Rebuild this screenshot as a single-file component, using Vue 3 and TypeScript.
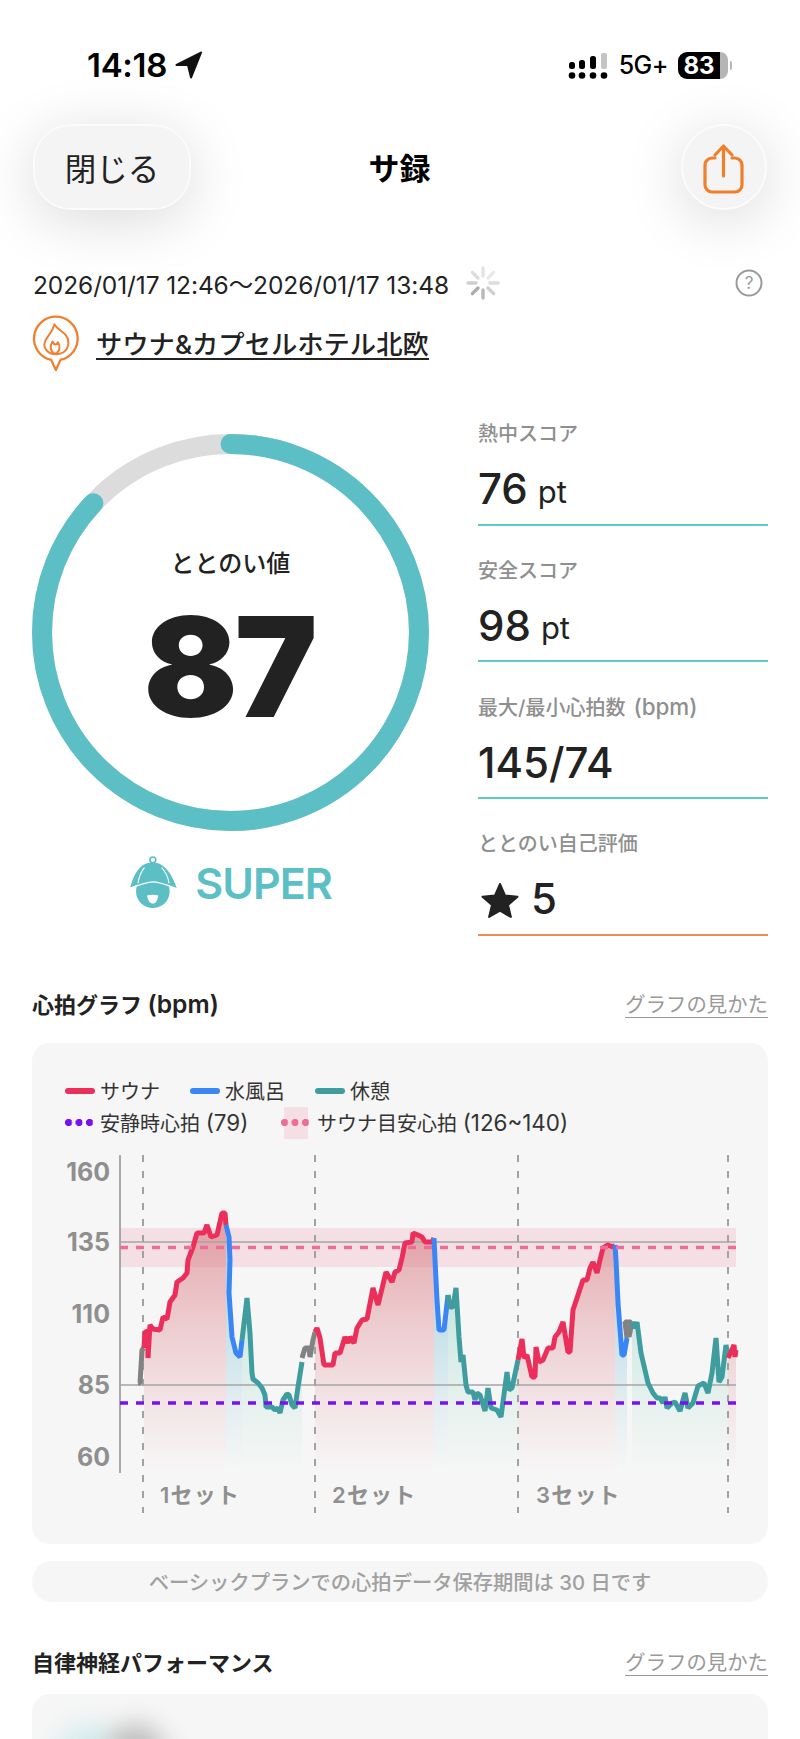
<script setup lang="ts">
type Kind = 'sauna' | 'water' | 'rest' | 'idle'

const circumference = 2 * Math.PI * 188.5
const gaugeDash = `${circumference * 0.87} ${circumference}`

const scores = [
  { label: '熱中スコア', note: '', value: '76', unit: 'pt' },
  { label: '安全スコア', note: '', value: '98', unit: 'pt' },
  { label: '最大/最小心拍数', note: '(bpm)', value: '145/74', unit: '' },
]

const axisLabels = [
  { text: '160', y: 1172 },
  { text: '135', y: 1242 },
  { text: '110', y: 1314 },
  { text: '85', y: 1385 },
  { text: '60', y: 1457 },
]
const setLines = [143, 315, 518, 728]
const setLabels = [
  { text: '1セット', x: 160 },
  { text: '2セット', x: 332 },
  { text: '3セット', x: 536 },
]

const segments: { kind: Kind; pts: number[] }[] = [
  { kind: 'idle', pts: [138, 1383, 140, 1383, 141, 1367, 142, 1350, 144, 1348] },
  { kind: 'sauna', pts: [144, 1348, 145, 1332, 148, 1331, 148, 1358, 150, 1325, 153, 1329, 160, 1330, 163, 1317, 167, 1319, 170, 1302, 175, 1295, 177, 1282, 183, 1278, 187, 1273, 188, 1260, 193, 1247, 197, 1233, 204, 1233, 207, 1225, 211, 1237, 217, 1235, 222, 1213, 225, 1213, 226, 1225] },
  { kind: 'water', pts: [226, 1225, 229, 1237, 230, 1260, 229, 1293, 232, 1337, 236, 1353, 240, 1357, 242, 1340] },
  { kind: 'rest', pts: [242, 1340, 247, 1298, 250, 1333, 252, 1373, 253, 1379, 258, 1383, 262, 1388, 265, 1395, 266, 1407, 272, 1407, 275, 1410, 278, 1408, 280, 1413, 283, 1400, 287, 1394, 289, 1395, 292, 1405, 295, 1408, 298, 1387, 302, 1362] },
  { kind: 'idle', pts: [302, 1358, 305, 1348, 309, 1348, 310, 1357, 313, 1340, 315, 1332] },
  { kind: 'sauna', pts: [315, 1332, 317, 1328, 320, 1338, 324, 1365, 333, 1365, 335, 1353, 340, 1353, 345, 1337, 348, 1343, 350, 1337, 354, 1343, 357, 1328, 362, 1320, 367, 1319, 373, 1288, 378, 1305, 386, 1272, 392, 1282, 395, 1272, 399, 1270, 402, 1258, 405, 1243, 412, 1242, 413, 1233, 418, 1235, 422, 1237, 425, 1242, 432, 1242, 434, 1238] },
  { kind: 'water', pts: [434, 1238, 435, 1260, 437, 1300, 439, 1330, 444, 1330, 448, 1295] },
  { kind: 'rest', pts: [448, 1295, 450, 1307, 453, 1307, 456, 1288, 459, 1337, 461, 1362, 463, 1355, 466, 1385, 468, 1392, 473, 1392, 475, 1400, 477, 1393, 480, 1395, 485, 1411, 488, 1388, 491, 1408, 497, 1410, 501, 1417, 507, 1372, 509, 1390, 512, 1388, 518, 1360] },
  { kind: 'sauna', pts: [518, 1360, 522, 1339, 524, 1358, 527, 1355, 532, 1377, 535, 1377, 536, 1347, 539, 1362, 543, 1360, 548, 1348, 553, 1348, 555, 1337, 559, 1332, 563, 1322, 568, 1352, 570, 1352, 573, 1310, 577, 1298, 583, 1280, 587, 1280, 590, 1268, 593, 1262, 597, 1273, 600, 1260, 603, 1248, 608, 1245, 613, 1247, 615, 1245] },
  { kind: 'water', pts: [615, 1245, 616, 1260, 618, 1303, 622, 1355, 624, 1355, 627, 1338] },
  { kind: 'idle', pts: [627, 1338, 625, 1322, 631, 1322, 629, 1337, 632, 1322] },
  { kind: 'rest', pts: [632, 1322, 635, 1328, 637, 1322, 641, 1353, 648, 1383, 653, 1393, 657, 1398, 660, 1398, 663, 1403, 665, 1397, 667, 1408, 672, 1403, 675, 1402, 680, 1411, 685, 1393, 688, 1408, 693, 1403, 698, 1386, 704, 1383, 708, 1393, 712, 1373, 716, 1338, 719, 1382, 722, 1377, 726, 1345, 728, 1355] },
  { kind: 'sauna', pts: [728, 1358, 731, 1352, 734, 1345, 735, 1357, 736, 1350] },
]

function toLine(pts: number[]) {
  let out = ''
  for (let i = 0; i < pts.length; i += 2) {
    out += `${pts[i]},${pts[i + 1]} `
  }
  return out.trim()
}

function toArea(pts: number[]) {
  return `${pts[0]},1472 ${toLine(pts)} ${pts[pts.length - 2]},1472`
}
</script>

<template>
  <div class="page">
    <div class="status">
      <div class="status-left">
        <span class="clock">14:18</span>
        <svg width="27" height="28" viewBox="0 0 26 27">
          <path d="M25 1.5 1.5 13.5h11l3 12z" fill="#111" stroke="#111" stroke-width="2" stroke-linejoin="round" />
        </svg>
      </div>
      <div class="status-right">
        <svg width="40" height="28" viewBox="0 0 40 28">
          <rect x="1" y="11" width="6" height="7" rx="2.5" fill="#000" />
          <rect x="11" y="9" width="6" height="9" rx="2.5" fill="#000" />
          <rect x="22" y="5" width="6" height="13" rx="2.5" fill="#000" />
          <rect x="33" y="2" width="6" height="16" rx="2" fill="#c4c4c4" />
          <circle cx="4" cy="24.5" r="3.3" fill="#000" />
          <circle cx="14" cy="24.5" r="3.3" fill="#000" />
          <circle cx="25" cy="24.5" r="3.3" fill="#000" />
          <circle cx="36" cy="24.5" r="3.3" fill="#000" />
        </svg>
        <span class="network">5G+</span>
        <div class="battery">
          <span class="battery-level">83</span>
          <span class="battery-rest"></span>
          <span class="battery-tip"></span>
        </div>
      </div>
    </div>

    <div class="nav">
      <button class="glass close">閉じる</button>
      <div class="nav-title">サ録</div>
      <button class="glass share">
        <svg width="42" height="52" viewBox="0 0 42 52">
          <path d="M12 15H9a7 7 0 0 0-7 7v20a7 7 0 0 0 7 7h23a7 7 0 0 0 7-7V22a7 7 0 0 0-7-7h-3" fill="none" stroke="#f07f2c" stroke-width="3.2" stroke-linecap="round" />
          <path d="M20.5 33V3M12 12l8.5-9 8.5 9" fill="none" stroke="#f07f2c" stroke-width="3.2" stroke-linecap="round" stroke-linejoin="round" />
        </svg>
      </button>
    </div>

    <div class="date-row">
      <span class="date">2026/01/17 12:46～2026/01/17 13:48</span>
      <svg class="spinner" width="34" height="34" viewBox="0 0 34 34">
        <g stroke-width="3.4" stroke-linecap="round">
          <path d="M17 2v8" stroke="#e2e2e2" />
          <path d="M27.6 6.4 22 12" stroke="#e8e8e8" />
          <path d="M32 17h-8" stroke="#dcdcdc" />
          <path d="M27.6 27.6 22 22" stroke="#cfcfcf" />
          <path d="M17 32v-8" stroke="#b8b8b8" />
          <path d="M6.4 27.6 12 22" stroke="#ababab" />
          <path d="M2 17h8" stroke="#d0d0d0" />
          <path d="M6.4 6.4 12 12" stroke="#dcdcdc" />
        </g>
      </svg>
      <svg class="help" width="28" height="28" viewBox="0 0 28 28">
        <circle cx="14" cy="14" r="12.5" fill="none" stroke="#999" stroke-width="2" />
        <text x="14" y="20" text-anchor="middle" class="help-mark">?</text>
      </svg>
    </div>

    <div class="venue">
      <svg width="48" height="58" viewBox="35 200 145 175">
        <path d="M107 205a66 66 0 0 1 14 130.500L107 366l-14-30.500A66 66 0 0 1 107 205z" fill="none" stroke="#f08030" stroke-width="7" stroke-linejoin="round" />
        <path d="M103 228c7 18 44 25 42 57-2 27-24 35-40 33-21 0-36-18-32-33 3-18 22-27 30-57z" fill="none" stroke="#f08030" stroke-width="6" stroke-linejoin="round" />
        <path d="M104 318c-14-9-16-23-7-38 5 11 11 13 16 2 10 14 6 28-9 36z" fill="none" stroke="#f08030" stroke-width="6" stroke-linejoin="round" />
      </svg>
      <span class="venue-name">サウナ&amp;カプセルホテル北欧</span>
    </div>

    <div class="summary">
      <div class="gauge-col">
        <div class="gauge">
          <svg width="397" height="397" viewBox="0 0 397 397">
            <circle cx="198.500" cy="198.500" r="188.500" fill="none" stroke="#dcdcdc" stroke-width="20" />
            <circle cx="198.500" cy="198.500" r="188.500" fill="none" stroke="#5dbfc6" stroke-width="20" stroke-linecap="round" :stroke-dasharray="gaugeDash" transform="rotate(-90 198.500 198.500)" />
          </svg>
          <div class="gauge-text">
            <div class="gauge-label">ととのい値</div>
            <div class="gauge-value">87</div>
          </div>
        </div>
        <div class="rank">
          <svg width="49" height="55" viewBox="25 45 150 170">
            <circle cx="98" cy="60" r="9" fill="none" stroke="#5dbfc6" stroke-width="5" />
            <circle cx="98" cy="157" r="52" fill="#5dbfc6" />
            <path d="M28 146C40 100 60 68 98 68s62 42 74 80c-30-13-52-23-74-23s-45 10-70 21z" fill="#5dbfc6" />
            <path d="M26 149c32-13 54-21 72-21 22 0 49 12 76 22" fill="none" stroke="#fff" stroke-width="3.500" />
            <path d="M72 84C60 98 55 114 52 132M125 84c14 14 20 30 23 48" fill="none" stroke="#fff" stroke-width="3.500" />
            <path d="M80 170c12-3 24-3 35 0-2 16-9 25-17 25s-16-9-18-25z" fill="#fff" />
          </svg>
          <span class="rank-name">SUPER</span>
        </div>
      </div>
      <div class="score-col">
        <div v-for="score in scores" :key="score.label" class="score">
          <div class="score-label">{{ score.label }}<span v-if="score.note" class="latin note">{{ score.note }}</span></div>
          <div class="score-value">{{ score.value }}<span v-if="score.unit" class="score-unit">{{ score.unit }}</span></div>
        </div>
        <div class="score score-self">
          <div class="score-label">ととのい自己評価</div>
          <div class="score-value">
            <svg class="star" width="40" height="37" viewBox="0 0 40 37">
              <path d="M20 3l5 11.500 12.500 1.200-9.500 8.300 2.900 12-10.900-6.400-10.900 6.400 2.900-12-9.500-8.300L15 14.500z" fill="#222" stroke="#222" stroke-width="2" stroke-linejoin="round" />
            </svg>
            5
          </div>
        </div>
      </div>
    </div>

    <div class="section-head heart-head">
      <h2>心拍グラフ <span class="latin">(bpm)</span></h2>
      <a>グラフの見かた</a>
    </div>

    <div class="card chart-card">
      <div class="legend">
        <div class="legend-row">
          <span class="legend-item item-sauna"><i class="bar sauna"></i>サウナ</span>
          <span class="legend-item item-water"><i class="bar water"></i>水風呂</span>
          <span class="legend-item"><i class="bar rest"></i>休憩</span>
        </div>
        <div class="legend-row">
          <span class="legend-item item-calm"><i class="dots calm"></i>安静時心拍&nbsp;<span class="latin">(79)</span></span>
          <span class="legend-item"><i class="band-swatch"><i class="dots target"></i></i>サウナ目安心拍&nbsp;<span class="latin">(126~140)</span></span>
        </div>
      </div>
      <svg class="chart" width="736" height="403" viewBox="32 1140 736 403">
        <defs>
          <linearGradient id="fill-sauna" gradientUnits="userSpaceOnUse" x1="0" y1="1215" x2="0" y2="1472">
            <stop offset="0" stop-color="#d9838a" stop-opacity="0.72" />
            <stop offset="1" stop-color="#e8a0a8" stop-opacity="0" />
          </linearGradient>
          <linearGradient id="fill-water" gradientUnits="userSpaceOnUse" x1="0" y1="1290" x2="0" y2="1472">
            <stop offset="0" stop-color="#8cc6da" stop-opacity="0.6" />
            <stop offset="1" stop-color="#a8d4e4" stop-opacity="0" />
          </linearGradient>
          <linearGradient id="fill-rest" gradientUnits="userSpaceOnUse" x1="0" y1="1290" x2="0" y2="1472">
            <stop offset="0" stop-color="#9cd8c8" stop-opacity="0.55" />
            <stop offset="1" stop-color="#b0e2d4" stop-opacity="0" />
          </linearGradient>
        </defs>

        <rect x="120" y="1228" width="616" height="39" fill="#f3dfe4" />
        <template v-for="(seg, i) in segments" :key="'area' + i">
          <polygon v-if="seg.kind !== 'idle'" :points="toArea(seg.pts)" :fill="`url(#fill-${seg.kind})`" />
        </template>

        <line v-for="x in setLines" :key="x" :x1="x" :x2="x" y1="1155" y2="1513" class="set-line" />
        <line x1="120" x2="120" y1="1155" y2="1473" class="axis" />
        <line x1="120" x2="736" y1="1242" y2="1242" class="guide" />
        <line x1="120" x2="736" y1="1385" y2="1385" class="guide" />

        <polyline v-for="(seg, i) in segments" :key="'line' + i" :points="toLine(seg.pts)" :class="['trace', seg.kind]" />

        <line x1="120" x2="736" y1="1247.500" y2="1247.500" class="dash-target" />
        <line x1="120" x2="736" y1="1403" y2="1403" class="dash-calm" />

        <text v-for="a in axisLabels" :key="a.text" x="110" :y="a.y + 9" text-anchor="end" class="axis-label">{{ a.text }}</text>
        <text v-for="s in setLabels" :key="s.text" :x="s.x" y="1503" class="set-label">{{ s.text }}</text>
      </svg>
    </div>

    <div class="notice">ベーシックプランでの心拍データ保存期間は 30 日です</div>

    <div class="section-head perf-head">
      <h2>自律神経パフォーマンス</h2>
      <a>グラフの見かた</a>
    </div>

    <div class="card perf-card">
      <div class="blob teal"></div>
      <div class="blob gray"></div>
    </div>
  </div>
</template>

<style>
body {
  margin: 0;
  background: #fff;
}
</style>

<style scoped>
.page {
  width: 800px;
  height: 1739px;
  overflow: hidden;
  background: #fff;
  color: #222;
  font-family: Inter, "Noto Sans CJK JP", sans-serif;
}

.latin {
  font-size: 1.120em;
}

.note {
  margin-left: 8px;
}

.status {
  height: 124px;
  box-sizing: border-box;
  padding: 50px 72px 0 87px;
  display: flex;
  justify-content: space-between;
  align-items: flex-start;
  color: #000;
}

.status-left {
  display: flex;
  align-items: center;
  gap: 8px;
  height: 30px;
}

.clock {
  font-size: 33px;
  line-height: 30px;
  font-weight: 600;
  letter-spacing: -0.3px;
}

.status-right {
  display: flex;
  align-items: center;
  height: 30px;
}

.network {
  margin-left: 11px;
  font-size: 25px;
  font-weight: 500;
  letter-spacing: -0.5px;
}

.battery {
  margin-left: 10px;
  width: 50px;
  height: 27px;
  display: flex;
  position: relative;
  border-radius: 9px;
}

.battery-level {
  width: 42px;
  background: #000;
  color: #fff;
  border-radius: 9px 0 0 9px;
  font-size: 24px;
  line-height: 27px;
  font-weight: 700;
  text-align: center;
}

.battery-rest {
  width: 8px;
  background: #b5b5b5;
  border-radius: 0 9px 9px 0;
}

.battery-tip {
  position: absolute;
  right: -4px;
  top: 9px;
  width: 2px;
  height: 9px;
  border-radius: 0 2px 2px 0;
  background: #b5b5b5;
}

.nav {
  height: 86px;
  padding: 0 33px;
  display: flex;
  justify-content: space-between;
  align-items: center;
}

.glass {
  height: 86px;
  box-sizing: border-box;
  border: 2px solid #fbfbfb;
  background: #f4f4f4;
  box-shadow: 0 10px 60px rgba(0, 0, 0, 0.15);
  color: #222;
  font-family: inherit;
  padding: 0;
  display: flex;
  align-items: center;
  justify-content: center;
}

.close {
  width: 158px;
  border-radius: 38px;
  font-size: 31.500px;
}

.share {
  width: 86px;
  border-radius: 50%;
}

.share svg {
  margin-top: 4px;
}

.nav-title {
  font-size: 31px;
  font-weight: 700;
  color: #000;
  margin-left: -73px;
  margin-top: -2px;
}

.date-row {
  margin-top: 56px;
  height: 34px;
  padding: 0 37px 0 33px;
  display: flex;
  align-items: center;
}

.date {
  font-size: 24.500px;
  white-space: nowrap;
  letter-spacing: -0.1px;
}

.spinner {
  margin-left: 17px;
}

.help {
  margin-left: auto;
}

.help-mark {
  font-size: 17px;
  fill: #999;
}

.venue {
  margin-top: 15px;
  padding-left: 32px;
  display: flex;
  align-items: flex-start;
  gap: 16px;
}

.venue-name {
  margin-top: 17px;
  font-size: 26.300px;
  line-height: 26px;
  font-weight: 500;
  border-bottom: 2.500px solid #222;
}

.summary {
  margin-top: 16px;
  padding: 0 32px;
  display: flex;
  justify-content: space-between;
}

.gauge-col {
  width: 397px;
  padding-top: 45px;
}

.gauge {
  display: grid;
  width: 397px;
  height: 397px;
}

.gauge > * {
  grid-area: 1 / 1;
}

.gauge-text {
  text-align: center;
}

.gauge-label {
  margin-top: 115px;
  font-size: 24px;
  line-height: 30px;
  font-weight: 500;
}

.gauge-value {
  margin: 33px 0 0 -3px;
  font-size: 139px;
  line-height: 110px;
  font-weight: 900;
  letter-spacing: -3px;
}

.rank {
  margin-top: 24px;
  display: flex;
  align-items: center;
  justify-content: center;
  gap: 17px;
  color: #5dbfc6;
}

.rank-name {
  font-size: 43px;
  font-weight: 600;
  letter-spacing: -1px;
}

.score-col {
  width: 290px;
}

.score {
  height: 136.700px;
  box-sizing: border-box;
  padding-top: 31px;
  border-bottom: 2px solid #5fc9c6;
}

.score-self {
  border-bottom-color: #ee8f4e;
}

.score-label {
  font-size: 20px;
  line-height: 28px;
  font-weight: 500;
  color: #8f8f8f;
  white-space: nowrap;
}

.score-value {
  margin-top: 16px;
  height: 50px;
  display: flex;
  align-items: center;
  font-size: 42px;
  line-height: 50px;
  font-weight: 500;
  color: #222;
}

.score-unit {
  margin-left: 10px;
  margin-top: 5px;
  font-size: 31px;
  font-weight: 400;
}

.star {
  margin-left: 2px;
  margin-right: 11px;
}

.section-head {
  padding: 0 32px;
  display: flex;
  justify-content: space-between;
  align-items: center;
  height: 30px;
}

.heart-head {
  margin-top: 54px;
}

.perf-head {
  margin-top: 46px;
}

.section-head h2 {
  margin: 0 0 3px;
  font-size: 22px;
  font-weight: 600;
  color: #222;
}

.section-head a {
  font-size: 20.400px;
  color: #999;
  border-bottom: 1.500px solid #999;
  line-height: 25px;
}

.card {
  margin: 0 32px;
  background: #f6f6f6;
  border-radius: 18px;
}

.chart-card {
  margin-top: 23px;
  height: 501px;
  overflow: hidden;
}

.legend {
  height: 97px;
  box-sizing: border-box;
  padding: 32px 0 0 33px;
}

.legend-row {
  height: 32px;
  display: flex;
  align-items: center;
  font-size: 20px;
  color: #333;
}

.legend-item {
  display: flex;
  align-items: center;
  white-space: pre;
}

.item-sauna,
.item-water {
  width: 125px;
}

.item-calm {
  width: 219px;
}

.bar {
  width: 30px;
  height: 6px;
  border-radius: 3px;
  margin-right: 5px;
}

.bar.sauna {
  background: #ec2f5a;
}

.bar.water {
  background: #3a86f5;
}

.bar.rest {
  background: #3f9c9f;
}

.dots {
  width: 28px;
  height: 7px;
  margin-right: 7px;
  display: block;
  background-size: 10.500px 7px;
  background-repeat: repeat-x;
}

.dots.calm {
  background-image: radial-gradient(circle at 3.500px 3.500px, #7a10f0 3.400px, transparent 3.800px);
}

.band-swatch {
  width: 24px;
  height: 32px;
  margin-right: 9px;
  background: #f3dfe4;
  display: flex;
  align-items: center;
}

.dots.target {
  flex: none;
  margin: 0 0 0 -3px;
  background-image: radial-gradient(circle at 3.500px 3.500px, #ee6c98 3.400px, transparent 3.800px);
}

.chart {
  display: block;
}

.set-line {
  stroke: #999;
  stroke-width: 1.800;
  stroke-dasharray: 7 9;
}

.axis {
  stroke: #8f8f8f;
  stroke-width: 1.500;
}

.guide {
  stroke: #a5a5a5;
  stroke-width: 1.500;
}

.trace {
  fill: none;
  stroke-width: 5;
  stroke-linejoin: bevel;
}

.trace.sauna {
  stroke: #ec2f5a;
}

.trace.water {
  stroke: #3a86f5;
}

.trace.rest {
  stroke: #3f9c9f;
}

.trace.idle {
  stroke: #828282;
}

.dash-target {
  stroke: #ee6c98;
  stroke-width: 3.500;
  stroke-dasharray: 8 8;
}

.dash-calm {
  stroke: #7a10f0;
  stroke-width: 3.500;
  stroke-dasharray: 8 8;
}

.axis-label {
  font-size: 25px;
  font-weight: 700;
  fill: #8f8f8f;
}

.set-label {
  font-size: 22px;
  font-weight: 600;
  fill: #8f8f8f;
  letter-spacing: 1.200px;
}

.notice {
  margin: 17px 32px 0;
  height: 41px;
  border-radius: 20px;
  background: #f6f6f6;
  display: flex;
  align-items: center;
  justify-content: center;
  font-size: 20.300px;
  font-weight: 500;
  color: #a0a0a0;
  white-space: nowrap;
}

.perf-card {
  margin-top: 16px;
  height: 140px;
  display: flex;
  padding: 30px 0 0 24px;
  overflow: hidden;
}

.blob {
  width: 62px;
  height: 62px;
  border-radius: 50%;
  filter: blur(12px);
}

.blob.teal {
  background: #d5ecee;
}

.blob.gray {
  margin-left: -14px;
  background: #bdbdbd;
}
</style>
